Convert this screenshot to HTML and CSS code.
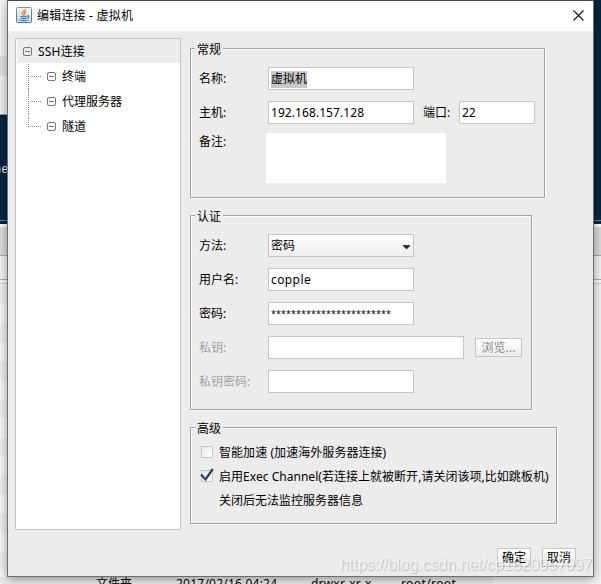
FILE: index.html
```html
<!DOCTYPE html>
<html lang="zh-CN">
<head>
<meta charset="utf-8">
<title>编辑连接 - 虚拟机</title>
<link rel="stylesheet" href="styles.css">
</head>
<body>
<div class="desktop">
  <div class="strip strip-left">
    <div class="side-panel"></div>
    <div class="terminal"><span class="prompt">-</span><span class="term-text">ne</span></div>
    <div class="toolbar"></div>
    <div class="header"></div>
    <div class="listing"></div>
  </div>
  <div class="strip strip-right">
    <div class="terminal tall"></div>
    <div class="toolbar"></div>
    <div class="header"></div>
    <div class="listing plain"></div>
  </div>
  <div class="file-row"><span class="c1">文件夹</span><span class="c2">2017/02/16 04:24</span><span class="c3">drwxr-xr-x</span><span class="c4">root/root</span></div>

  <div class="dialog">
    <header class="titlebar">
      <svg class="java" width="16" height="16" viewBox="0 0 16 16">
        <defs><linearGradient id="jb" x1="0" y1="0" x2="0" y2="1"><stop offset="0" stop-color="#7d95a8"/><stop offset="1" stop-color="#48799f"/></linearGradient><linearGradient id="jf" x1="0" y1="0" x2="0" y2="1"><stop offset="0" stop-color="#f2f4f5"/><stop offset="1" stop-color="#cad9e4"/></linearGradient></defs>
        <rect x=".5" y=".5" width="15" height="15" rx="1" fill="url(#jf)" stroke="url(#jb)"/>
        <path d="M9.2 1.8C9.5 4 5.2 4.7 6.2 6.6L7.8 8.6M10.3 4.4C7.8 5.3 8.2 6.2 8.7 7.1L8.4 8.4" fill="none" stroke="#e8802c" stroke-width="1.2"/>
        <path d="M4.5 9.2C5.5 10 9.5 10 11 9.2M5.2 11C6.5 11.7 9 11.6 10.2 11M3.2 12.6C5 14 10.5 13.8 12.2 12.6M11.3 8.9C13.6 8.6 13.2 10.6 11.2 11.1" fill="none" stroke="#47789f" stroke-width="1.1"/>
      </svg>
      <h1>编辑连接 - 虚拟机</h1>
      <svg class="close" width="11" height="11" viewBox="0 0 11 11"><path d="M.5.5l10 10M10.5.5l-10 10" stroke="#111" stroke-width="1.1"/></svg>
    </header>
    <div class="content">
      <nav class="tree">
        <div class="root"><i class="box"></i><span>SSH连接</span></div>
        <div class="branch"><i class="box"></i>终端</div>
        <div class="branch"><i class="box"></i>代理服务器</div>
        <div class="branch last"><i class="box"></i>隧道</div>
      </nav>
      <main class="forms">
        <section class="group general">
          <h2>常规</h2>
          <div class="row"><label>名称:</label><div class="field"><span class="selected">虚拟机</span></div></div>
          <div class="row"><label>主机:</label><div class="field host">192.168.157.128</div><label class="port-label">端口:</label><div class="field port">22</div></div>
          <div class="row note"><label>备注:</label><div class="area"></div></div>
        </section>
        <section class="group auth">
          <h2>认证</h2>
          <div class="row"><label>方法:</label><div class="field select">密码<svg width="7" height="4" viewBox="0 0 7 4"><path d="M0 0H7V1L4 4H3L0 1Z" fill="#333"/></svg></div></div>
          <div class="row"><label>用户名:</label><div class="field user">copple</div></div>
          <div class="row"><label>密码:</label><div class="field"><span class="stars">************************</span></div></div>
          <div class="row disabled"><label>私钥:</label><div class="field wide"></div><div class="button browse">浏览...</div></div>
          <div class="row disabled"><label>私钥密码:</label><div class="field"></div></div>
        </section>
        <section class="group advanced">
          <h2>高级</h2>
          <div class="check"><i class="tick"></i><span class="t1">智能加速 (加速海外服务器连接)</span></div>
          <div class="check"><i class="tick"><svg width="15" height="14" viewBox="0 0 15 14"><path d="M1 6.5L5.5 11.5L12.8 1" fill="none" stroke="#2b455f" stroke-width="2.3"/></svg></i><span class="t2">启用Exec Channel(若连接上就被断开,请关闭该项,比如跳板机)</span></div>
          <div class="check hint"><span>关闭后无法监控服务器信息</span></div>
        </section>
      </main>
    </div>
    <footer class="actions"><div class="button">确定</div><div class="button">取消</div></footer>
  </div>
  <div class="watermark">https://blog.csdn.net/cp1820957097</div>
</div>
</body>
</html>
```
FILE: styles.css
```css
* { box-sizing: border-box; }
body {
  margin: 0;
  font: 12px/16px "Noto Sans", "Noto Sans CJK SC", sans-serif;
  color: #000;
  overflow: hidden;
}
h1, h2 { margin: 0; font: inherit; }
.desktop {
  position: relative;
  width: 601px;
  height: 584px;
  display: grid;
  grid-template-columns: 8px 1fr 8px;
  grid-template-rows: 577px 7px;
  overflow: hidden;
  background: #e6e6e6;
}
.strip { overflow: hidden; }
.strip-right { grid-column: 3; }
.side-panel {
  height: 115px;
  background: linear-gradient(#f5f5f5 56px, #e2e2e2 56px 76px, #f3f3f3 76px 114px, #999 114px);
}
.terminal {
  display: flow-root;
  height: 109px;
  background: linear-gradient(#012641 105px, #738290 105px 106px, #012641 106px);
  font: 12px/16px "Liberation Mono", monospace;
  color: #f5f5f5;
}
.terminal span { display: block; }
.terminal .prompt { color: #c58b3c; margin: 10px 0 0 -6px; }
.terminal .term-text { margin: 21px 0 0 -6px; }
.terminal.tall { height: 224px; background: linear-gradient(#012641 220px, #738290 220px 221px, #012641 221px); }
.toolbar { height: 32px; background: linear-gradient(#fff 3px, #ddd 3px 31px, #aaa 31px); }
.header { height: 28px; background: linear-gradient(#f5f5f5 23px, #aaa 23px 24px, #fafafa 24px 27px, #ccc 27px); }
.listing { height: 300px; background: repeating-linear-gradient(#f9f9f9 0 2px, #f0f0f0 2px 20px, #f9f9f9 20px 38px); }
.listing.plain { background: #f5f5f5; }
.file-row {
  grid-column: 1 / 4;
  display: flex;
  padding-left: 96px;
  overflow: hidden;
  background: linear-gradient(90deg, #ececec 493px, #f4f4f4 493px);
  white-space: nowrap;
  line-height: 14px;
}
.c1 { width: 80px; }
.c2 { width: 135px; letter-spacing: .23px; }
.c3 { width: 90px; letter-spacing: .2px; }
.c4 { letter-spacing: .4px; }

.dialog {
  position: absolute;
  left: 7px;
  top: 0;
  width: 587px;
  height: 577px;
  border: 1px solid #6e6e6e;
  border-top-color: #444;
  background: #ececec;
  box-shadow: 0 2px 10px rgba(0, 0, 0, .4);
}
.titlebar {
  height: 30px;
  padding: 0 9px 0 8px;
  display: flex;
  align-items: center;
  background: #fff;
}
.titlebar h1 { margin-left: 5px; flex: 1; letter-spacing: .2px; }
.java { margin-top: -2px; }
.close { margin-top: -2px; }

.content { display: flex; gap: 9px; padding: 7px 0 0 7px; }
.tree {
  width: 166px;
  height: 492px;
  padding: 0 0 0 1px;
  border: 1px solid #c5c5c5;
  background: #fff;
}
.root, .branch { display: flex; align-items: center; }
.root { height: 24px; padding-left: 6px; margin-bottom: 1px; background: #ececec; }
.root span { padding-top: 2px; letter-spacing: .2px; }
.box {
  width: 9px;
  height: 9px;
  margin-right: 6px;
  border: 1px solid #777;
  border-radius: 2px;
  background: linear-gradient(#777, #777) center / 5px 1px no-repeat;
}
.branch {
  height: 25px;
  padding-left: 30px;
  background:
    repeating-linear-gradient(90deg, #888 0 1px, transparent 1px 2px) 11px 12px / 14px 1px no-repeat,
    repeating-linear-gradient(#888 0 1px, transparent 1px 2px) 11px 0 / 1px 100% no-repeat;
}
.last { background-size: 14px 1px, 1px 12px; }

.group {
  position: relative;
  border: 1px solid #a3a3a3;
  box-shadow: 1px 1px #fff, inset 1px 1px #fff;
  padding: 18px 0 0 8px;
}
.group h2 {
  position: absolute;
  left: 4px;
  top: -7px;
  padding: 0 2px;
  background: #ececec;
}
.general { width: 355px; height: 150px; margin-top: 10px; }
.auth { width: 342px; height: 195px; margin-top: 17px; }
.advanced { width: 367px; height: 97px; margin-top: 17px; padding-top: 12px; }
.row { display: flex; height: 23px; margin-bottom: 11px; align-items: center; }
.row label { width: 69px; }
.row .port-label { width: 36px; margin-left: 9px; }
.field {
  width: 146px;
  height: 23px;
  padding: 3px 2px 0;
  border: 1px solid #c5c5c5;
  background: #fff;
}
.host { letter-spacing: .07px; }
.port { width: 76px; }
.wide { width: 196px; }
.user { letter-spacing: .4px; }
.selected { display: inline-block; background: #c8c8c8; height: 17px; }
.stars { display: block; font-size: 9px; line-height: 15px; letter-spacing: .04px; }
.select {
  display: flex;
  justify-content: space-between;
  background: linear-gradient(#fff, #eee);
}
.select svg { margin: 7px 1px 0 0; }
.row.note { height: 50px; margin-top: -2px; align-items: flex-start; }
.note label { width: 67px; padding-top: 1px; }
.area { width: 180px; height: 50px; background: #fff; }
.disabled label { color: #a0a0a0; }
.button {
  width: 34px;
  height: 19px;
  border: 1px solid #c5c5c5;
  background: linear-gradient(#fff, #ececec);
  text-align: center;
  line-height: 18px;
  white-space: nowrap;
}
.browse { width: 47px; margin-left: 11px; color: #888; line-height: 17px; letter-spacing: .1px; }
.check { display: flex; align-items: center; height: 24px; padding-left: 2px; white-space: nowrap; }
.check span { padding-top: 2px; }
.t1 { letter-spacing: .06px; }
.t2 { letter-spacing: .03px; }
.tick { width: 12px; height: 12px; margin-right: 6px; border: 1px solid #c5c5c5; background: linear-gradient(135deg, #e8e8e8, #fff); }
.tick svg { display: block; margin: -3px 0 0 -2px; }
.check.hint { padding-left: 20px; }
.actions { display: flex; justify-content: flex-end; gap: 11px; padding: 18px 17px 0 0; }
.watermark {
  position: absolute;
  left: 340px;
  top: 555px;
  font: 16px/20px "Liberation Sans", sans-serif;
  letter-spacing: -.04px;
  color: rgba(255, 255, 255, .6);
  text-shadow: 1px 1px 1px rgba(0, 0, 0, .2);
  white-space: nowrap;
}
```
